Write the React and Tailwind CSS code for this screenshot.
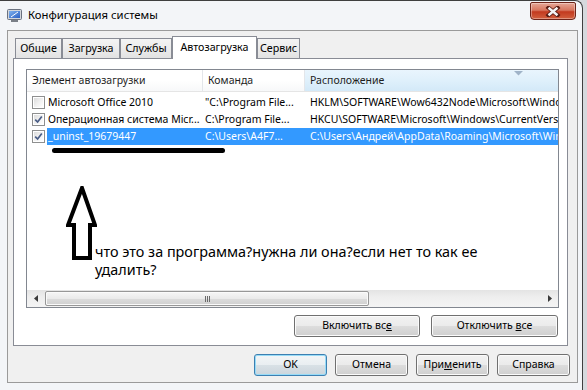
import React from "react";

const FONT = { fontFamily: '"Noto Sans", "Segoe UI", Arial, sans-serif' };

function AppIcon() {
  return (
    <svg width="15" height="13" viewBox="0 0 15 13">
      <defs>
        <linearGradient id="scr" x1="0" y1="0" x2="1" y2="1">
          <stop offset="0" stopColor="#7fb2ee" />
          <stop offset="1" stopColor="#2a5fc4" />
        </linearGradient>
      </defs>
      <rect x="0.5" y="0.5" width="14" height="10" rx="1" fill="#d3d6db" stroke="#6b7280" />
      <rect x="2" y="2" width="11" height="7" fill="url(#scr)" />
      <path d="M4 8 L11 3" stroke="#ffffff" strokeWidth="1" />
      <rect x="4" y="11" width="7" height="2" fill="#7a7f87" />
    </svg>
  );
}

function CloseBtn() {
  return (
    <div className="w-[46px] h-[18px] rounded-b-[4px] rounded-t-[2px] border border-[#6d2419] bg-[linear-gradient(to_bottom,#e6a797_0%,#d7765f_45%,#c23a1f_55%,#d2603f_100%)] shadow-[inset_0_0_0_1px_rgba(255,255,255,0.35)] flex items-center justify-center">
      <svg width="16" height="11" viewBox="0 0 16 11">
        <path d="M3.5 1.8 L12.5 9.2 M12.5 1.8 L3.5 9.2" stroke="#5a1b12" strokeWidth="4.2" strokeLinecap="square" />
        <path d="M3.5 1.8 L12.5 9.2 M12.5 1.8 L3.5 9.2" stroke="#f4f4f4" strokeWidth="2.4" />
      </svg>
    </div>
  );
}

function Checkbox({ checked }) {
  return (
    <div className="w-[13px] h-[13px] border border-[#8e8f8f] bg-white p-[1px]">
      <div className="w-full h-full bg-gradient-to-br from-[#dcdcdc] via-[#f0f0f0] to-white flex items-center justify-center">
        {checked && (
          <svg width="9" height="9" viewBox="0 0 9 9">
            <path d="M1.2 4.6 L3.6 7 L7.8 1.4" fill="none" stroke="#4a5d86" strokeWidth="1.7" />
          </svg>
        )}
      </div>
    </div>
  );
}

function Btn({ children, w, focused }) {
  return (
    <div
      className={
        focused
          ? "h-[22px] rounded-[3px] border border-[#3c7fb1] bg-[linear-gradient(to_bottom,#f2f5f7_0%,#e9eef1_50%,#d9e1e6_50%,#cbd5dc_100%)] shadow-[inset_0_0_0_1px_#97dbf7] flex items-center justify-center text-[10.5px] text-black"
          : "h-[22px] rounded-[3px] border border-[#707070] bg-[linear-gradient(to_bottom,#f2f2f2_0%,#ebebeb_50%,#dddddd_50%,#cfcfcf_100%)] shadow-[inset_0_0_0_1px_#fbfbfb] flex items-center justify-center text-[10.5px] text-black"
      }
      style={{ width: w }}
    >
      {children}
    </div>
  );
}

const rows = [
  {
    checked: false,
    c1: "Microsoft Office 2010",
    c2: '"C:\\Program File...',
    c3: "HKLM\\SOFTWARE\\Wow6432Node\\Microsoft\\Windows\\CurrentVersion\\Run",
  },
  {
    checked: true,
    c1: "Операционная система Micr...",
    c2: "C:\\Program File...",
    c3: "HKCU\\SOFTWARE\\Microsoft\\Windows\\CurrentVersion\\Run",
  },
  {
    checked: true,
    sel: true,
    c1: "_uninst_19679447",
    c2: "C:\\Users\\A4F7...",
    c3: "C:\\Users\\Андрей\\AppData\\Roaming\\Microsoft\\Windows\\Start Menu",
  },
];

function Row({ r }) {
  return (
    <div className="h-[17px] flex items-stretch text-[10.5px] whitespace-nowrap">
      <div className="w-[176px] flex items-center shrink-0">
        <div className="pl-[5px] pr-[2px]">
          <Checkbox checked={r.checked} />
        </div>
        <div className={r.sel ? "flex-1 h-full flex items-center pl-[1px] bg-[#3399ff] text-white overflow-hidden" : "flex-1 h-full flex items-center pl-[1px] text-black overflow-hidden"}>
          {r.c1}
        </div>
      </div>
      <div className={r.sel ? "w-[102px] shrink-0 flex items-center pl-[2px] bg-[#3399ff] text-white overflow-hidden" : "w-[102px] shrink-0 flex items-center pl-[2px] text-black overflow-hidden"}>
        {r.c2}
      </div>
      <div className={r.sel ? "flex-1 flex items-center pl-[5px] bg-[#3399ff] text-white overflow-hidden" : "flex-1 flex items-center pl-[5px] text-black overflow-hidden"}>
        {r.c3}
      </div>
    </div>
  );
}

function Tab({ w, children, selected }) {
  return (
    <div
      className={
        selected
          ? "h-[23px] -mb-[1px] relative z-10 border border-b-0 border-[#898c95] bg-white flex items-center justify-center text-[10.7px] text-black pb-[2px]"
          : "h-[20px] border border-b-0 border-[#898c95] bg-[linear-gradient(to_bottom,#f4f4f4_0%,#ececec_50%,#e2e2e2_100%)] flex items-center justify-center text-[10.7px] text-black"
      }
      style={{ width: w }}
    >
      {children}
    </div>
  );
}

export default function App() {
  return (
    <div className="w-[587px] h-[390px] overflow-hidden bg-[#d6d9dd]" style={FONT}>
      <div className="w-[583px] h-[392px] bg-[#f3f5f8] border-t border-r border-[#3f3f3f] rounded-tr-[8px] flex flex-col">
        {/* title bar */}
        <div className="h-[29px] flex items-start shrink-0">
          <div className="mt-[8px] ml-[7px]">
            <AppIcon />
          </div>
          <div className="mt-[6px] ml-[6px] text-[11.3px] leading-[16px] text-black">Конфигурация системы</div>
          <div className="ml-auto mt-[1px] mr-[6px]">
            <CloseBtn />
          </div>
        </div>

        {/* client area */}
        <div className="ml-[7px] w-[571px] h-[353px] shrink-0 border border-[#9a9a9a] bg-[#f0f0f0] flex flex-col pt-[5px] px-[5px]">
          {/* tabs */}
          <div className="h-[22px] flex items-end pl-[2px]">
            <Tab w={47}>Общие</Tab>
            <Tab w={58}>Загрузка</Tab>
            <Tab w={52}>Службы</Tab>
            <Tab w={85} selected>
              Автозагрузка
            </Tab>
            <Tab w={43}>Сервис</Tab>
          </div>

          {/* tab panel */}
          <div className="w-[555px] h-[288px] shrink-0 border border-[#898c95] bg-white flex flex-col pl-[12px] pt-[10px]">
            {/* list view */}
            <div className="w-[533px] h-[239px] border border-[#828790] bg-white relative flex flex-col overflow-hidden">
              {/* header */}
              <div className="h-[22px] flex shrink-0 text-[10.5px] text-[#1e1e1e] border-b border-[#e5e5e5] bg-[linear-gradient(to_bottom,#ffffff_0%,#ffffff_50%,#f7f8f9_100%)]">
                <div className="w-[176px] shrink-0 flex items-center pl-[5px] border-r border-[#e3e6ea]">Элемент автозагрузки</div>
                <div className="w-[102px] shrink-0 flex items-center pl-[5px] border-r border-[#e3e6ea]">Команда</div>
                <div className="flex-1 flex items-center pl-[5px] relative bg-[linear-gradient(to_bottom,#e9f5fd_0%,#dff0fb_50%,#d3e9f8_100%)]">
                  Расположение
                  <svg className="absolute left-[209px] top-[1px]" width="9" height="5" viewBox="0 0 9 5">
                    <path d="M0 0 L9 0 L4.5 4.5Z" fill="#9fb3c8" />
                  </svg>
                </div>
              </div>

              {/* rows */}
              <div className="pt-[2px] flex flex-col">
                {rows.map((r, i) => (
                  <Row key={i} r={r} />
                ))}
              </div>

              <div className="flex-1" />

              {/* horizontal scrollbar */}
              <div className="h-[17px] shrink-0 flex items-stretch bg-[linear-gradient(to_bottom,#e4e4e4_0%,#eeeeee_40%,#f4f4f4_100%)]">
                <div className="w-[17px] flex items-center justify-center">
                  <svg width="4" height="7" viewBox="0 0 4 7">
                    <path d="M4 0 L0 3.5 L4 7Z" fill="#3a3a3a" />
                  </svg>
                </div>
                <div className="ml-[1px] w-[324px] my-[1px] rounded-[2px] border border-[#979797] bg-[linear-gradient(to_bottom,#f6f6f6_0%,#eaeaea_50%,#dcdcdc_50%,#d0d0d0_100%)] shadow-[inset_0_0_0_1px_#fafafa] flex items-center justify-center gap-[1px]">
                  <div className="w-[1px] h-[6px] bg-[#6a6a6a]" />
                  <div className="w-[1px] h-[6px] bg-[#6a6a6a]" />
                  <div className="w-[1px] h-[6px] bg-[#6a6a6a]" />
                </div>
                <div className="flex-1" />
                <div className="w-[17px] flex items-center justify-center">
                  <svg width="4" height="7" viewBox="0 0 4 7">
                    <path d="M0 0 L4 3.5 L0 7Z" fill="#3a3a3a" />
                  </svg>
                </div>
              </div>

              {/* paint annotations drawn over the list */}
              <div className="absolute left-[25px] top-[78px] w-[173px] h-[5px] rounded-full bg-black" />
              <svg className="absolute left-[39px] top-[116px]" width="31" height="75" viewBox="0 0 31 75">
                <path
                  d="M16 2 L2 39 L8 39 L8 72 L24 72 L24 39 L29 39 Z"
                  fill="none"
                  stroke="#000"
                  strokeWidth="4"
                  strokeLinejoin="miter"
                />
              </svg>
              <div className="absolute left-[68px] top-[173px] text-[14.4px] leading-[18px] text-black whitespace-nowrap">
                <div>что это за программа?нужна ли она?если нет то как ее</div>
                <div>удалить?</div>
              </div>
            </div>

            {/* enable/disable buttons */}
            <div className="w-[533px] mt-[7px] flex justify-end gap-[11px] pr-[1px]">
              <Btn w={126}>
                <span>
                  Включить вс<span className="underline">е</span>
                </span>
              </Btn>
              <Btn w={127}>
                <span>
                  Отключить <span className="underline">в</span>се
                </span>
              </Btn>
            </div>
          </div>

          {/* dialog buttons */}
          <div className="mt-[8px] flex justify-end gap-[8px] pr-[2px]">
            <Btn w={73} focused>
              OK
            </Btn>
            <Btn w={73}>Отмена</Btn>
            <Btn w={73}>
              <span>
                При<span className="underline">м</span>енить
              </span>
            </Btn>
            <Btn w={73}>Справка</Btn>
          </div>
        </div>
      </div>
    </div>
  );
}
